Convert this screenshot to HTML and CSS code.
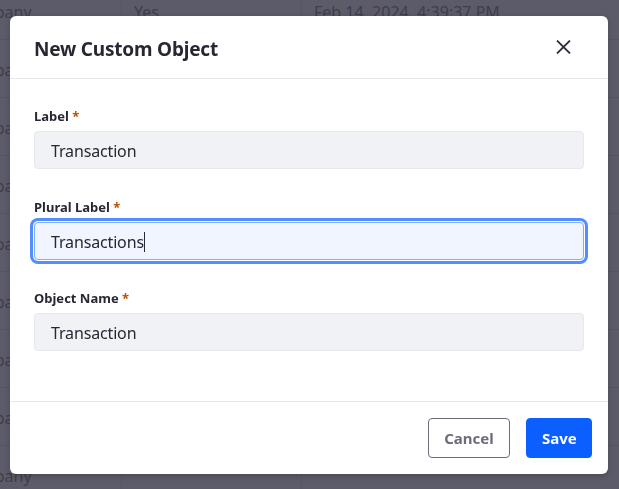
FILE: index.html
```html
<!DOCTYPE html>
<html>
<head>
<meta charset="utf-8">
<link rel="stylesheet" href="styles.css">
</head>
<body>
<div class="bg-table">
  <div class="row"><span class="c1">Company</span><span class="c2">Yes</span><span class="c3">Feb 14, 2024, 4:39:37 PM</span></div>
  <div class="row"><span class="c1">Company</span><span class="c2"></span><span class="c3"></span></div>
  <div class="row"><span class="c1">Company</span><span class="c2"></span><span class="c3"></span></div>
  <div class="row"><span class="c1">Company</span><span class="c2"></span><span class="c3"></span></div>
  <div class="row"><span class="c1">Company</span><span class="c2"></span><span class="c3"></span></div>
  <div class="row"><span class="c1">Company</span><span class="c2"></span><span class="c3"></span></div>
  <div class="row"><span class="c1">Company</span><span class="c2"></span><span class="c3"></span></div>
  <div class="row"><span class="c1">Company</span><span class="c2"></span><span class="c3"></span></div>
  <div class="row"><span class="c1">Company</span><span class="c2"></span><span class="c3"></span></div>
</div>
<div class="backdrop">
  <div class="modal">
    <div class="modal-header">
      <h1 class="modal-title">New Custom Object</h1>
      <button class="close" aria-label="Close">
        <svg width="15" height="14" viewBox="0 0 15 14"><path d="M1 0.5 L14 13.5 M14 0.5 L1 13.5" stroke="#30313f" stroke-width="1.8" fill="none"/></svg>
      </button>
    </div>
    <div class="modal-body">
      <div class="field">
        <label class="label">Label <span class="req">*</span></label>
        <div class="input">Transaction</div>
      </div>
      <div class="field">
        <label class="label">Plural Label <span class="req">*</span></label>
        <div class="input focus">Transactions<span class="caret"></span></div>
      </div>
      <div class="field">
        <label class="label">Object Name <span class="req">*</span></label>
        <div class="input">Transaction</div>
      </div>
    </div>
    <div class="modal-footer">
      <button class="btn btn-secondary">Cancel</button>
      <button class="btn btn-primary">Save</button>
    </div>
  </div>
</div>
</body>
</html>
```
FILE: styles.css
```css
html, body {
  margin: 0;
  padding: 0;
  width: 619px;
  height: 489px;
  overflow: hidden;
  background: #5c5b6a;
  font-family: "Noto Sans", "Liberation Sans", sans-serif;
}
.bg-table {
  margin-top: -18px;
  margin-left: -52px;
}
.row {
  display: grid;
  grid-template-columns: 174px 180px 1fr;
  height: 57px;
  border-bottom: 1px solid #555462;
  align-items: center;
  color: #3f3e4b;
  font-size: 16px;
}
.row span { padding-left: 12px; height: 57px; line-height: 60px; border-right: 1px solid #575665; }
.row span:last-child { border-right: none; }
.backdrop {
  position: fixed;
  inset: 0;
  padding: 16px 11px 15px 10px;
  display: flex;
}
.modal {
  flex: 1;
  background: #fff;
  border-radius: 6px;
  display: flex;
  flex-direction: column;
  box-shadow: 0 2px 6px rgba(0,0,0,0.2);
}
.modal-header {
  height: 63px;
  box-sizing: border-box;
  padding: 4px 37px 0 24px;
  border-bottom: 1px solid #e7e7ed;
  display: flex;
  align-items: center;
  justify-content: space-between;
}
.modal-title {
  margin: 0;
  font-size: 19px;
  font-weight: 700;
  color: #272833;
  letter-spacing: -0.2px;
}
.close {
  background: none;
  border: none;
  padding: 0;
  width: 15px;
  height: 14px;
  display: flex;
  margin-top: -4px;
}
.modal-body {
  flex: 1;
  padding: 28px 24px 0 24px;
  display: flex;
  flex-direction: column;
  gap: 29px;
}
.field { display: flex; flex-direction: column; gap: 6px; }
.label {
  font-size: 13px;
  font-weight: 700;
  color: #272833;
  line-height: 18px;
}
.req { color: #b95000; }
.input {
  height: 38px;
  box-sizing: border-box;
  background: #f1f2f5;
  border: 1px solid #e7e7ed;
  border-radius: 4px;
  padding: 2px 16px 0 16px;
  display: flex;
  align-items: center;
  font-size: 16px;
  letter-spacing: -0.15px;
  color: #272833;
}
.input.focus {
  background: #f0f5ff;
  border: 1px solid #80acff;
  box-shadow: 0 0 0 1px #fff, 0 0 0 4px #528eff;
}
.caret {
  display: inline-block;
  width: 1px;
  height: 20px;
  background: #272833;
  margin-left: 0;
}
.modal-footer {
  height: 72px;
  border-top: 1px solid #e7e7ed;
  display: flex;
  align-items: center;
  justify-content: flex-end;
  gap: 16px;
  padding: 0 16px 0 24px;
}
.btn {
  height: 40px;
  border-radius: 4px;
  font-family: inherit;
  font-size: 15px;
  font-weight: 700;
  padding: 0 15px;
  margin-top: 0;
}
.btn-secondary {
  background: #fff;
  border: 1px solid #6b6c7e;
  color: #6b6c7e;
  width: 82px;
}
.btn-primary {
  background: #0b5fff;
  border: 1px solid #0b5fff;
  color: #fff;
  width: 66px;
}
```
